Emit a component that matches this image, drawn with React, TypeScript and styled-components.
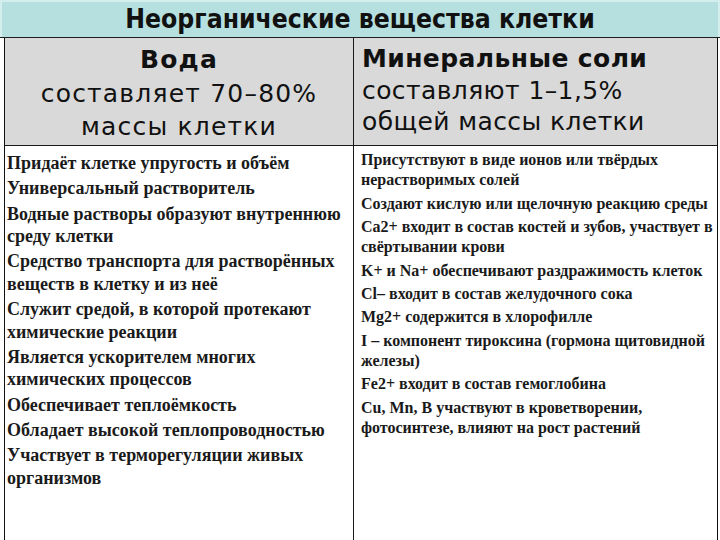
import React from "react";
import styled, { createGlobalStyle } from "styled-components";

const Global = createGlobalStyle`
  html, body { margin: 0; padding: 0; background: #ffffff; }
  #root { width: 720px; height: 540px; }
`;

const Page = styled.div`
  width: 720px;
  height: 540px;
  display: flex;
  flex-direction: column;
  background: #ffffff;
  overflow: hidden;
`;

const Header = styled.header`
  height: 37px;
  flex: 0 0 37px;
  background: #b6dfdf;
  border-bottom: 1px solid #1e1e1e;
  box-shadow: inset 2px 2px 0 #d4eeee, inset -2px 0 0 #d4eeee;
  display: flex;
  align-items: center;
  justify-content: center;
`;

const Title = styled.h1`
  margin: 0;
  font-family: "DejaVu Sans Condensed", "DejaVu Sans", sans-serif;
  font-weight: 700;
  font-size: 26.3px;
  color: #111;
`;

const Table = styled.div`
  flex: 1;
  display: grid;
  grid-template-columns: 349px 1fr;
  grid-template-rows: 108px 1fr;
  margin: 0 2px 0 4px;
  border-left: 1px solid #111;
  border-right: 1px solid #111;
`;

const HeadCell = styled.div<{ $align: "center" | "left"; $divider?: boolean }>`
  background: #d9d9d9;
  border-bottom: 1px solid #1a1a1a;
  border-right: ${(p) => (p.$divider ? "1px solid #1a1a1a" : "none")};
  text-align: ${(p) => p.$align};
  padding: ${(p) => (p.$align === "center" ? "5px 0 0 0" : "5px 0 0 8px")};
  font-family: "DejaVu Sans", "Liberation Sans", sans-serif;
  font-size: 25px;
  letter-spacing: ${(p) => (p.$align === "center" ? "1.2px" : "0.4px")};
  line-height: ${(p) => (p.$align === "center" ? "33.5px" : "31.5px")};
  color: #111;
`;

const HeadLine = styled.div<{ $bold?: boolean }>`
  font-weight: ${(p) => (p.$bold ? 700 : 400)};
`;

const BodyCell = styled.ul<{ $divider?: boolean; $small?: boolean }>`
  list-style: none;
  margin: 0;
  padding: ${(p) => (p.$small ? "4px 1px 0 7px" : "6px 3px 0 2px")};
  border-right: ${(p) => (p.$divider ? "1px solid #1a1a1a" : "none")};
  font-family: "Liberation Serif", Tinos, "Times New Roman", "DejaVu Serif", serif;
  font-weight: 700;
  font-size: ${(p) => (p.$small ? "16px" : "18px")};
  line-height: ${(p) => (p.$small ? "20.2px" : "22.5px")};
  color: #1a1a1a;
  display: flex;
  flex-direction: column;
  gap: ${(p) => (p.$small ? "3.2px" : "2.8px")};
`;

const Item = styled.li`
  margin: 0;
`;

const water = [
  "Придаёт клетке упругость и объём",
  "Универсальный растворитель",
  "Водные растворы образуют внутреннюю среду клетки",
  "Средство транспорта для растворённых веществ в клетку и из неё",
  "Служит средой, в которой протекают химические реакции",
  "Является ускорителем многих химических процессов",
  "Обеспечивает теплоёмкость",
  "Обладает высокой теплопроводностью",
  "Участвует в терморегуляции живых организмов",
];

const salts = [
  "Присутствуют в виде ионов или твёрдых нерастворимых солей",
  "Создают кислую или щелочную реакцию среды",
  "Ca2+ входит в состав костей и зубов, участвует в свёртывании крови",
  "K+ и Na+ обеспечивают раздражимость клеток",
  "Cl– входит в состав желудочного сока",
  "Mg2+ содержится в хлорофилле",
  "I – компонент тироксина (гормона щитовидной железы)",
  "Fe2+ входит в состав гемоглобина",
  "Cu, Mn, B участвуют в кроветворении, фотосинтезе, влияют на рост растений",
];

export default function App() {
  return (
    <Page>
      <Global />
      <Header>
        <Title>Неорганические вещества клетки</Title>
      </Header>
      <Table>
        <HeadCell $align="center" $divider>
          <HeadLine $bold>Вода</HeadLine>
          <HeadLine>составляет 70–80%</HeadLine>
          <HeadLine>массы клетки</HeadLine>
        </HeadCell>
        <HeadCell $align="left">
          <HeadLine $bold>Минеральные соли</HeadLine>
          <HeadLine>составляют 1–1,5%</HeadLine>
          <HeadLine>общей массы клетки</HeadLine>
        </HeadCell>
        <BodyCell $divider>
          {water.map((t) => (
            <Item key={t}>{t}</Item>
          ))}
        </BodyCell>
        <BodyCell $small>
          {salts.map((t) => (
            <Item key={t}>{t}</Item>
          ))}
        </BodyCell>
      </Table>
    </Page>
  );
}
